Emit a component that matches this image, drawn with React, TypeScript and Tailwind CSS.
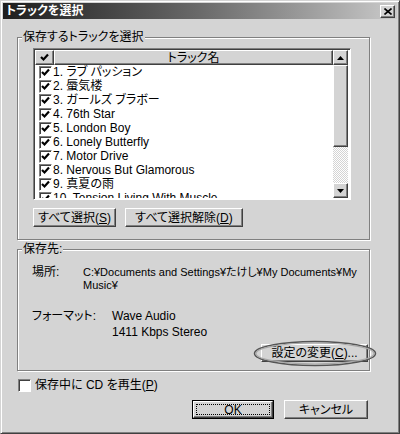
import React from "react";

const raised =
  "border border-t-white border-l-white border-r-[#404040] border-b-[#404040] shadow-[inset_-1px_-1px_0_#808080]";
const sunken =
  "border border-t-[#808080] border-l-[#808080] border-r-white border-b-white shadow-[inset_1px_1px_0_#404040]";

function Check({ className = "" }: { className?: string }) {
  return (
    <svg width="9" height="9" viewBox="0 0 9 9" className={className}>
      <path d="M1 4 L3.5 6.5 L8 1.5" fill="none" stroke="#000" strokeWidth="2.2" />
    </svg>
  );
}

function CheckBox({ checked }: { checked: boolean }) {
  return (
    <div className={`w-[13px] h-[13px] bg-white flex items-center justify-center shrink-0 ${sunken}`}>
      {checked && <Check />}
    </div>
  );
}

function Group({
  title,
  className = "",
  children,
}: {
  title: string;
  className?: string;
  children?: React.ReactNode;
}) {
  return (
    <div
      className={`relative border border-[#808080] shadow-[inset_1px_1px_0_#fff,1px_1px_0_#fff] ${className}`}
    >
      <span className="absolute left-[4px] top-[-7px] bg-[#d4d4d4] px-[1px] leading-[13px]">{title}</span>
      {children}
    </div>
  );
}

function Btn({
  children,
  className = "",
  def = false,
}: {
  children: React.ReactNode;
  className?: string;
  def?: boolean;
}) {
  if (def) {
    return (
      <div className={`border border-black ${className}`}>
        <div className={`h-full ${raised} flex items-center justify-center p-[2px]`}>
          <div className="w-full h-full border border-dotted border-black flex items-center justify-center">
            {children}
          </div>
        </div>
      </div>
    );
  }
  return (
    <div className={`${raised} flex items-center justify-center ${className}`}>{children}</div>
  );
}

function U({ children }: { children: React.ReactNode }) {
  return <span className="underline underline-offset-[1px]">{children}</span>;
}

const tracks = [
  "1. ラブ パッション",
  "2. 蜃気楼",
  "3. ガールズ ブラボー",
  "4. 76th Star",
  "5. London Boy",
  "6. Lonely Butterfly",
  "7. Motor Drive",
  "8. Nervous But Glamorous",
  "9. 真夏の雨",
  "10. Tension Living With Muscle",
];

function Arrow({ up }: { up: boolean }) {
  return (
    <svg width="7" height="4" viewBox="0 0 7 4">
      {up ? <path d="M0 4 L3.5 0 L7 4 Z" fill="#000" /> : <path d="M0 0 L3.5 4 L7 0 Z" fill="#000" />}
    </svg>
  );
}

export default function App() {
  return (
    <div
      className={`w-[400px] h-[434px] bg-[#d4d4d4] border border-t-[#d4d4d4] border-l-[#d4d4d4] border-r-[#404040] border-b-[#404040] shadow-[inset_1px_1px_0_#fff,inset_-1px_-1px_0_#808080] p-[2px] text-[12px] text-black font-['Liberation_Sans','Noto_Sans_CJK_JP',sans-serif] [font-feature-settings:'palt'] overflow-hidden`}
    >
      {/* Title bar */}
      <div className="h-[16px] flex items-center justify-between bg-gradient-to-r from-[#1e1e1e] via-[#6a6a6a] to-[#cacaca] pl-[3px] pr-[2px]">
        <span className="text-white font-bold text-[12px] leading-[14px]">トラックを選択</span>
        <div className={`w-[15px] h-[13px] bg-[#d4d4d4] flex items-center justify-center ${raised}`}>
          <svg width="8" height="7" viewBox="0 0 8 7">
            <path d="M0.5 0.5 L7.5 6.5 M7.5 0.5 L0.5 6.5" stroke="#000" strokeWidth="1.6" />
          </svg>
        </div>
      </div>

      <div className="pl-[14px]">
        {/* Group 1 */}
        <Group title="保存するトラックを選択" className="mt-[18px] w-[353px] h-[203px]">
          <div className="pl-[15px] pt-[10px]">
            <div className={`w-[318px] h-[152px] p-[1px] bg-white flex ${sunken}`}>
              <div className="w-[298px] h-full flex flex-col overflow-hidden">
                <div className="h-[15px] flex shrink-0">
                  <div className={`w-[19px] h-full bg-[#d4d4d4] flex items-center justify-center ${raised}`}>
                    <Check />
                  </div>
                  <div className={`flex-1 h-full bg-[#d4d4d4] flex items-center justify-center leading-[12px] ${raised}`}>
                    トラック名
                  </div>
                </div>
                <div className="flex flex-col">
                  {tracks.map((t) => (
                    <div key={t} className="h-[14px] flex items-center pl-[4px] shrink-0">
                      <CheckBox checked />
                      <span className="ml-[1px] whitespace-nowrap leading-[14px]">{t}</span>
                    </div>
                  ))}
                </div>
              </div>
              <div className="w-[15px] h-full flex flex-col">
                <div className={`h-[15px] bg-[#d4d4d4] flex items-center justify-center shrink-0 ${raised}`}>
                  <Arrow up />
                </div>
                <div className={`h-[82px] bg-[#d4d4d4] shrink-0 ${raised}`} />
                <div className="flex-1 bg-[repeating-conic-gradient(#ffffff_0_25%,#d4d4d4_0_50%)] bg-size-[2px_2px]" />
                <div className={`h-[15px] bg-[#d4d4d4] flex items-center justify-center shrink-0 ${raised}`}>
                  <Arrow up={false} />
                </div>
              </div>
            </div>
            <div className="flex gap-[9px] mt-[8px]">
              <Btn className="w-[83px] h-[19px]">
                <span>
                  すべて選択(<U>S</U>)
                </span>
              </Btn>
              <Btn className="w-[118px] h-[19px]">
                <span>
                  すべて選択解除(<U>D</U>)
                </span>
              </Btn>
            </div>
          </div>
        </Group>

        {/* Group 2 */}
        <Group title="保存先:" className="mt-[9px] w-[353px] h-[122px]">
          <div className="pl-[14px] pt-[16px]">
            <div className="flex leading-[13px]">
              <div className="w-[51px] shrink-0">場所:</div>
              <div className="whitespace-nowrap text-[11px] leading-[13px]">
                C:¥Documents and Settings¥たけし¥My Documents¥My
                <br />
                Music¥
              </div>
            </div>
            <div className="flex leading-[16px] mt-[16px]">
              <div className="w-[80px] shrink-0">フォーマット:</div>
              <div>
                <div>Wave Audio</div>
                <div>1411 Kbps Stereo</div>
              </div>
            </div>
            <div className="relative mt-[4px] ml-[229px] w-[107px]">
              <Btn className="w-[107px] h-[18px]">
                <span>
                  設定の変更(<U>C</U>)...
                </span>
              </Btn>
              <svg
                className="absolute left-[-8px] top-[-4px] pointer-events-none"
                width="124"
                height="27"
                viewBox="0 0 124 27"
              >
                <ellipse cx="62" cy="13.5" rx="60.5" ry="12" fill="none" stroke="#555" strokeWidth="1.5" />
                <ellipse cx="62" cy="13.5" rx="59" ry="10.5" fill="none" stroke="#a8a8a8" strokeWidth="1.2" />
              </svg>
            </div>
          </div>
        </Group>

        {/* Checkbox row */}
        <div className="mt-[8px] ml-[1px] flex items-center h-[13px]">
          <CheckBox checked={false} />
          <span className="ml-[4px] leading-[13px]">
            保存中に CD を再生(<U>P</U>)
          </span>
        </div>

        {/* Bottom buttons */}
        <div className="mt-[8px] ml-[175px] flex gap-[10px]">
          <Btn def className="w-[82px] h-[19px]">
            OK
          </Btn>
          <Btn className="w-[84px] h-[19px]">キャンセル</Btn>
        </div>
      </div>
    </div>
  );
}
